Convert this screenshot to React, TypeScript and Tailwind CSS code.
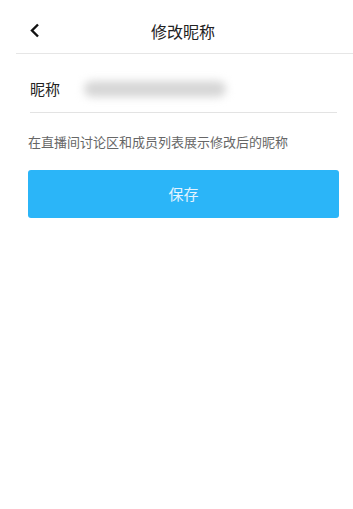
import React from "react";

export default function App() {
  return (
    <div className="h-[509px] w-[353px] bg-white font-['Noto_Sans_CJK_SC',sans-serif]">
      {/* header */}
      <div className="flex h-[53px] items-center pt-[8px]">
        <button className="flex w-[60px] items-center pl-[29px]">
          <svg width="11" height="15" viewBox="0 0 11 15" fill="none">
            <path d="M9 1.5L3 7.5L9 13.5" stroke="#111" strokeWidth="2.4" />
          </svg>
        </button>
        <div className="flex-1 pr-[47px] text-center text-[16px] text-[#222]">修改昵称</div>
      </div>
      <div className="ml-[16px] h-px bg-[#e6e6e6]" />

      <div className="pl-[28px] pr-[14px]">
        <div className="ml-[2px] mr-[2px] flex h-[59px] items-center border-b border-[#e3e3e3] pt-[12px]">
          <span className="text-[15px] text-[#222]">昵称</span>
          <div className="ml-[24px] h-[16px] w-[142px] rounded-full bg-[#d6d6d6] blur-[4px]" />
        </div>
        <p className="mt-[20px] text-[13px] leading-[18px] text-[#666]">在直播间讨论区和成员列表展示修改后的昵称</p>
        <button className="mt-[19px] flex h-[48px] w-full items-center justify-center rounded-[3px] bg-[#2bb5f8] text-[15px] text-[#e3f4ff]">
          保存
        </button>
      </div>
    </div>
  );
}
